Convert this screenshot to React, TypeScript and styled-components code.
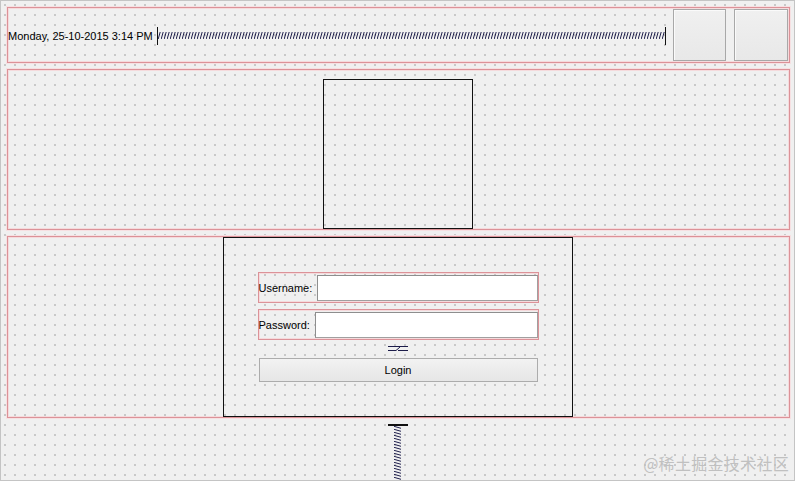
import React from "react";
import styled, { createGlobalStyle } from "styled-components";

const Global = createGlobalStyle`
  html, body { margin: 0; padding: 0; background: #f0f0f0; }
  * { box-sizing: border-box; }
`;

const Canvas = styled.div`
  position: relative;
  width: 795px;
  height: 481px;
  overflow: hidden;
  border: 1px solid #c4c4c4;
  padding: 6px 4px 0 6px;
  display: flex;
  flex-direction: column;
  gap: 6px;
  background-color: #f0f0f0;
  background-image: radial-gradient(circle at 1px 1px, #b2b2b2 0.6px, transparent 0.9px);
  background-size: 10px 10px;
  background-position: 3px 3px;
  font-family: "Liberation Sans", Arial, sans-serif;
  font-size: 11px;
  color: #000;
`;

const Frame = styled.div<{ $h: number }>`
  height: ${(p) => p.$h}px;
  border: 1px solid #dc9298;
  box-shadow: inset 0 0 0 1px #f5dadc, 0 0 0 1px #f6e0e2;
  flex-shrink: 0;
  display: flex;
`;

const TopFrame = styled(Frame)`
  align-items: center;
  padding: 0 1px 0 0;
`;

const DateLabel = styled.div`
  white-space: nowrap;
  margin-right: 4px;
  margin-top: 1px;
`;

const HSpacer = styled.div`
  flex: 1;
  display: flex;
  align-items: center;
  height: 18px;
  margin-right: 7px;
  margin-top: 1px;
`;

const EndBar = styled.div`
  width: 1px;
  height: 18px;
  background: #111;
`;

const HZig = styled.svg`
  flex: 1;
  height: 7px;
  display: block;
`;

const ToolButton = styled.div<{ $w: number }>`
  width: ${(p) => p.$w}px;
  height: 52px;
  border: 1px solid #a8a8a8;
  background: linear-gradient(#f0f0f0, #e8e8e8);
  box-shadow: inset 1px 1px 0 #fafafa;
  & + & { margin-left: 8px; }
`;

const MidFrame = styled(Frame)`
  justify-content: center;
  align-items: flex-end;
`;

const Square = styled.div`
  width: 150px;
  height: 150px;
  border: 1px solid #111;
  margin-left: -1px;
`;

const BottomFrame = styled(Frame)`
  justify-content: center;
  align-items: stretch;
`;

const LoginBox = styled.div`
  width: 350px;
  height: 180px;
  border: 1px solid #111;
  margin-left: -1px;
  padding-top: 34px;
  display: flex;
  flex-direction: column;
  align-items: center;
`;

const FieldRow = styled.div`
  width: 281px;
  height: 31px;
  border: 1px solid #dc9298;
  box-shadow: inset 0 0 0 1px #f5dadc;
  display: flex;
  align-items: center;
  padding: 1px 0 0 0;
  & + & { margin-top: 6px; }
`;

const FieldLabel = styled.label`
  white-space: nowrap;
  margin-right: 5px;
`;

const Input = styled.div`
  flex: 1;
  height: 26px;
  background: #fff;
  border: 1px solid #a0a0a0;
  border-top-color: #8e8e8e;
  border-left-color: #8e8e8e;
`;

const SmallSpacer = styled.svg`
  display: block;
  margin-top: 5px;
  width: 20px;
  height: 7px;
`;

const LoginButton = styled.div`
  margin-top: 6px;
  width: 279px;
  height: 24px;
  border: 1px solid #acacac;
  background: linear-gradient(#f2f2f2, #e6e6e6);
  display: flex;
  align-items: center;
  justify-content: center;
`;

const VSpacer = styled.div`
  flex: 1;
  display: flex;
  flex-direction: column;
  align-items: center;
  margin-left: -2px;
`;

const TopBar = styled.div`
  width: 20px;
  height: 2px;
  background: #111;
`;

const VZig = styled.svg`
  width: 7px;
  flex: 1;
  display: block;
`;

const Watermark = styled.div`
  position: absolute;
  right: 5px;
  bottom: 5px;
  font-family: "Noto Sans CJK SC", sans-serif;
  font-size: 16px;
  color: #c0c0c0;
  letter-spacing: 0.3px;
`;

export default function App() {
  return (
    <>
      <Global />
      <Canvas>
        <TopFrame $h={56}>
          <DateLabel>Monday, 25-10-2015 3:14 PM</DateLabel>
          <HSpacer>
            <EndBar />
            <HZig>
              <defs>
                <pattern id="hz" patternUnits="userSpaceOnUse" width="3" height="7">
                  <path d="M0.2 7 L2.2 0" stroke="#1c1c4a" strokeWidth="1" />
                </pattern>
              </defs>
              <rect x="0" y="0" width="100%" height="7" fill="url(#hz)" />
            </HZig>
            <EndBar />
          </HSpacer>
          <ToolButton $w={53} />
          <ToolButton $w={54} />
        </TopFrame>
        <MidFrame $h={161}>
          <Square />
        </MidFrame>
        <BottomFrame $h={182}>
          <LoginBox>
            <FieldRow>
              <FieldLabel>Username:</FieldLabel>
              <Input />
            </FieldRow>
            <FieldRow>
              <FieldLabel>Password:</FieldLabel>
              <Input />
            </FieldRow>
            <SmallSpacer viewBox="0 0 20 7">
              <path d="M0 1.5 H20 M0 5.5 H8 L12 2 M10 5.5 H20" stroke="#1c1c4a" strokeWidth="1" fill="none" />
            </SmallSpacer>
            <LoginButton>Login</LoginButton>
          </LoginBox>
        </BottomFrame>
        <VSpacer>
          <TopBar />
          <VZig>
            <defs>
              <pattern id="vz" patternUnits="userSpaceOnUse" width="7" height="3">
                <path d="M0 0.3 L7 2.3" stroke="#1c1c4a" strokeWidth="1" />
              </pattern>
            </defs>
            <rect x="0" y="0" width="7" height="100%" fill="url(#vz)" />
          </VZig>
        </VSpacer>
        <Watermark>@稀土掘金技术社区</Watermark>
      </Canvas>
    </>
  );
}
